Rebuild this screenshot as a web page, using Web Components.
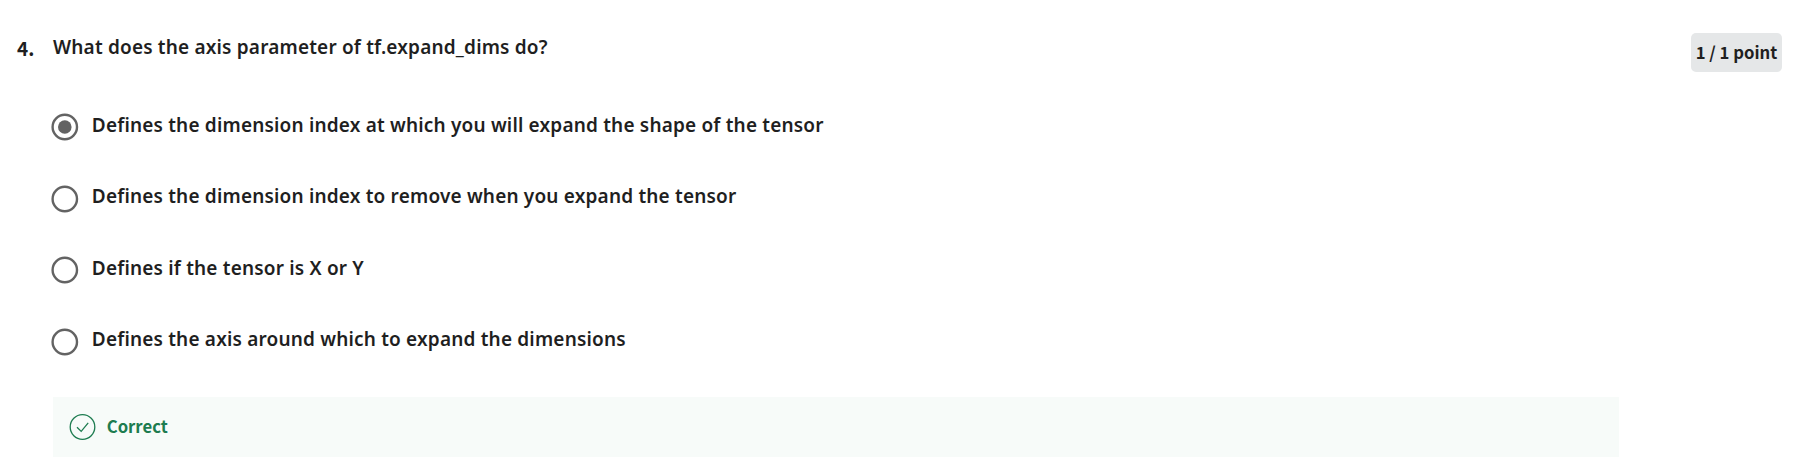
<!DOCTYPE html>
<html lang="en"><head><meta charset="utf-8"><title>Quiz question</title>
<style>body{margin:0;background:#fff;color:#1f1f1f;font-family:"Noto Sans","Open Sans",sans-serif}</style></head>
<body>
<quiz-question number="4.">
<span slot="prompt">What does the axis parameter of tf.expand_dims do?</span>
<point-badge slot="points">1 / 1 point</point-badge>
<quiz-option checked>Defines the dimension index at which you will expand the shape of the tensor</quiz-option>
<quiz-option>Defines the dimension index to remove when you expand the tensor</quiz-option>
<quiz-option>Defines if the tensor is X or Y</quiz-option>
<quiz-option>Defines the axis around which to expand the dimensions</quiz-option>
<quiz-feedback slot="feedback">Correct</quiz-feedback>
</quiz-question>
<script>
class Base extends HTMLElement{
  connectedCallback(){ if(!this.shadowRoot) this.attachShadow({mode:'open'}).innerHTML=this.view(); }
}
customElements.define('quiz-question',class extends Base{view(){return `
<style>
:host{display:grid;grid-template-columns:53px 1566px 1fr;height:469px;box-sizing:border-box;overflow:hidden}
.num{padding:34px 0 0 17px;font:700 19px/28px "Noto Sans CJK SC",sans-serif}
.prompt{font-weight:600;font-size:19px;line-height:26px;letter-spacing:.18px;padding-top:34px;height:32px}
.options{display:flex;flex-direction:column;gap:44.4px;padding-top:47px;height:331px;box-sizing:border-box;margin-left:-2px}
.side{padding:33px 12px 0 0;display:flex;justify-content:flex-end;align-items:flex-start}
</style>
<div class="num">${this.getAttribute('number')}</div>
<div><div class="prompt"><slot name="prompt"></slot></div><div class="options"><slot></slot></div><slot name="feedback"></slot></div>
<div class="side"><slot name="points"></slot></div>`}});
customElements.define('quiz-option',class extends Base{view(){return `
<style>
:host{display:flex;align-items:flex-start;height:27px;font-weight:600;font-size:19px;line-height:26px;letter-spacing:.18px;white-space:nowrap}
svg{width:28px;height:28px;flex:none;margin:.4px 12.8px 0 0}
span{margin-top:-1px}
</style>
<svg viewBox="0 0 28 28"><circle cx="13.8" cy="14" r="12.2" fill="none" stroke="#636363" stroke-width="2.4"/>${this.hasAttribute('checked')?'<circle cx="13.8" cy="14" r="6.8" fill="#636363"/>':''}</svg><span><slot></slot></span>`}});
customElements.define('point-badge',class extends Base{view(){return `
<style>:host{display:flex;justify-content:center;width:91px;height:39px;border-radius:5px;background:#e5e7e8;font:700 16.7px/39px "Noto Sans CJK SC",sans-serif;white-space:nowrap}</style><slot></slot>`}});
customElements.define('quiz-feedback',class extends Base{view(){return `
<style>:host{display:flex;align-items:center;height:60px;padding-left:16px;box-sizing:border-box;background:#f7fbf9;color:#1d7c50;font:700 16.7px/26px "Noto Sans CJK SC",sans-serif}
svg{width:27px;height:27px;flex:none;margin-right:10.7px}
span{padding-bottom:2px}</style>
<svg viewBox="0 0 27 27" fill="none" stroke="currentColor" stroke-width="1.3"><circle cx="13.5" cy="13" r="12.3"/><path d="M8 13.2l4.2 4.2 7-8.6"/></svg><span><slot></slot></span>`}});
</script></body></html>
